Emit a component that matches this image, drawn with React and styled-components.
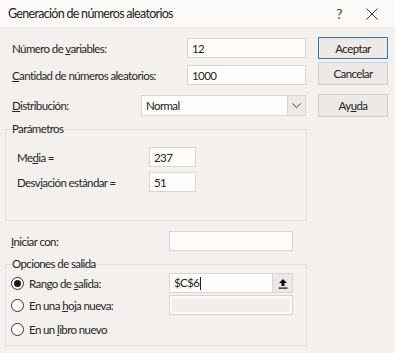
import React from "react";
import styled, { createGlobalStyle } from "styled-components";

const GlobalStyle = createGlobalStyle`
  html, body { margin: 0; padding: 0; background: #f3f0ed; }
  body {
    font-family: "Lato", "Noto Sans", sans-serif;
    font-size: 11.5px;
    letter-spacing: -0.6px;
    color: #262626;
  }
  * { box-sizing: border-box; }
`;

const Dialog = styled.div`
  width: 395px;
  height: 353px;
  background: #f3f0ed;
  overflow: hidden;
`;

const TitleBar = styled.div`
  height: 27px;
  background: #fbfaf8;
  display: flex;
  align-items: center;
  padding-left: 8px;
`;

const Title = styled.div`
  flex: 1;
  font-size: 12.5px;
  letter-spacing: -0.7px;
  color: #222;
`;

const TitleButton = styled.div`
  width: ${(p) => p.$w}px;
  display: flex;
  justify-content: center;
  align-items: center;
  color: #444;
  font-size: 14px;
`;

const Body = styled.div`
  display: flex;
  padding: 10px 0 0 5px;
  gap: 11px;
`;

const LeftCol = styled.div`
  width: 302px;
  display: flex;
  flex-direction: column;
`;

const ButtonCol = styled.div`
  width: 70px;
  display: flex;
  flex-direction: column;
`;

const Button = styled.div`
  height: ${(p) => (p.$primary ? 22 : 23)}px;
  margin-top: ${(p) => p.$mt || 0}px;
  background: #ece9e6;
  border: 1px solid ${(p) => (p.$primary ? "#2e78bf" : "#d0cdca")};
  display: flex;
  align-items: center;
  justify-content: center;
  color: #222;
`;

const Row = styled.div`
  display: grid;
  grid-template-columns: ${(p) => p.$labelW}px ${(p) => p.$inputW}px;
  align-items: center;
  padding-left: ${(p) => p.$indent || 0}px;
  margin-top: ${(p) => p.$mt || 0}px;
  height: ${(p) => p.$h || 20}px;
`;

const Label = styled.span`
  white-space: nowrap;
  display: flex;
  align-items: center;
  gap: 5px;
`;

const Key = styled.span`
  text-decoration: underline;
  text-underline-offset: 1px;
`;

const Input = styled.div`
  height: ${(p) => p.$h || 20}px;
  background: #fffdfb;
  border: 1px solid #d8d5d2;
  display: flex;
  align-items: center;
  padding-left: 4px;
  color: #222;
`;

const DisabledInput = styled.div`
  height: 20px;
  border: 1px solid #d6d3d0;
  padding: 2px;
  background: #fbfaf8;
  & > div {
    height: 100%;
    background: #f1eeeb;
  }
`;

const InputText = styled.span`
  flex: 1;
`;

const Caret = styled.span`
  display: inline-block;
  width: 1px;
  height: 13px;
  background: #222;
  vertical-align: middle;
  margin-left: 1px;
`;

const SideButton = styled.div`
  width: ${(p) => p.$w}px;
  align-self: stretch;
  background: #ebe8e5;
  border-left: 1px solid #d8d5d2;
  display: flex;
  align-items: center;
  justify-content: center;
`;

const Group = styled.fieldset`
  margin: ${(p) => p.$mt}px 0 0 0;
  padding: 0 0 ${(p) => p.$pb}px 0;
  border: 1px solid #e2dfdb;
  min-width: 0;
`;

const Legend = styled.legend`
  margin-left: 6px;
  padding: 0;
  line-height: 16px;
  color: #222;
`;

const Radio = styled.span`
  width: 13px;
  height: 13px;
  border-radius: 50%;
  border: 1px solid #333;
  background: #fffdfb;
  display: inline-flex;
  align-items: center;
  justify-content: center;
  &::after {
    content: "";
    width: 7px;
    height: 7px;
    border-radius: 50%;
    background: ${(p) => (p.$checked ? "#1a1a1a" : "transparent")};
  }
`;

export default function App() {
  return (
    <Dialog>
      <GlobalStyle />
      <TitleBar>
        <Title>Generación de números aleatorios</Title>
        <TitleButton $w={20}>?</TitleButton>
        <TitleButton $w={46}>
          <svg width="12" height="12" viewBox="0 0 12 12">
            <path d="M0.5 0.5 L11.5 11.5 M11.5 0.5 L0.5 11.5" stroke="#333" strokeWidth="1" />
          </svg>
        </TitleButton>
      </TitleBar>
      <Body>
        <LeftCol>
          <Row $labelW={175} $inputW={119} $indent={7} $mt={1}>
            <Label>
              <span>
                Número de <Key>v</Key>ariables:
              </span>
            </Label>
            <Input>12</Input>
          </Row>
          <Row $labelW={175} $inputW={119} $indent={7} $mt={7}>
            <Label>
              <span>
                <Key>C</Key>antidad de números aleatorios:
              </span>
            </Label>
            <Input>1000</Input>
          </Row>
          <Row $labelW={129} $inputW={165} $indent={7} $mt={10} $h={21}>
            <Label>
              <span>
                <Key>D</Key>istribución:
              </span>
            </Label>
            <Input $h={21}>
              <InputText>Normal</InputText>
              <SideButton $w={18}>
                <svg width="9" height="5" viewBox="0 0 9 5">
                  <path d="M0.5 0.5 L4.5 4.5 L8.5 0.5" stroke="#444" strokeWidth="1" fill="none" />
                </svg>
              </SideButton>
            </Input>
          </Row>
          <Group $mt={5} $pb={28}>
            <Legend>Parámetros</Legend>
            <Row $labelW={132} $inputW={47} $indent={11} $mt={10}>
              <Label>
                <span>
                  Me<Key>d</Key>ia =
                </span>
              </Label>
              <Input>237</Input>
            </Row>
            <Row $labelW={132} $inputW={47} $indent={11} $mt={5}>
              <Label>
                <span>
                  Desv<Key>i</Key>ación estándar =
                </span>
              </Label>
              <Input>51</Input>
            </Row>
          </Group>
          <Row $labelW={158} $inputW={124} $indent={6} $mt={10}>
            <Label>
              <span>
                <Key>I</Key>niciar con:
              </span>
            </Label>
            <Input />
          </Row>
          <Group $mt={5} $pb={6}>
            <Legend>Opciones de salida</Legend>
            <Row $labelW={158} $inputW={124} $indent={5} $mt={1} $h={20}>
              <Label>
                <Radio $checked />
                <span>
                  Rango de <Key>s</Key>alida:
                </span>
              </Label>
              <Input>
                <InputText>
                  $C$6
                  <Caret />
                </InputText>
                <SideButton $w={20}>
                  <svg width="10" height="11" viewBox="0 0 10 11">
                    <path d="M5 1 L1 5 L3.5 5 L3.5 8 L6.5 8 L6.5 5 L9 5 Z" fill="#111" />
                    <rect x="0.5" y="9.5" width="9" height="1.2" fill="#111" />
                  </svg>
                </SideButton>
              </Input>
            </Row>
            <Row $labelW={158} $inputW={124} $indent={5} $mt={2} $h={20}>
              <Label>
                <Radio />
                <span>
                  En una <Key>h</Key>oja nueva:
                </span>
              </Label>
              <DisabledInput>
                <div />
              </DisabledInput>
            </Row>
            <Row $labelW={158} $inputW={124} $indent={5} $mt={4} $h={20}>
              <Label>
                <Radio />
                <span>
                  En un <Key>l</Key>ibro nuevo
                </span>
              </Label>
            </Row>
          </Group>
        </LeftCol>
        <ButtonCol>
          <Button $primary>Aceptar</Button>
          <Button $mt={3}>Cancelar</Button>
          <Button $mt={9}>
            <span>
              Ay<Key>u</Key>da
            </span>
          </Button>
        </ButtonCol>
      </Body>
    </Dialog>
  );
}
